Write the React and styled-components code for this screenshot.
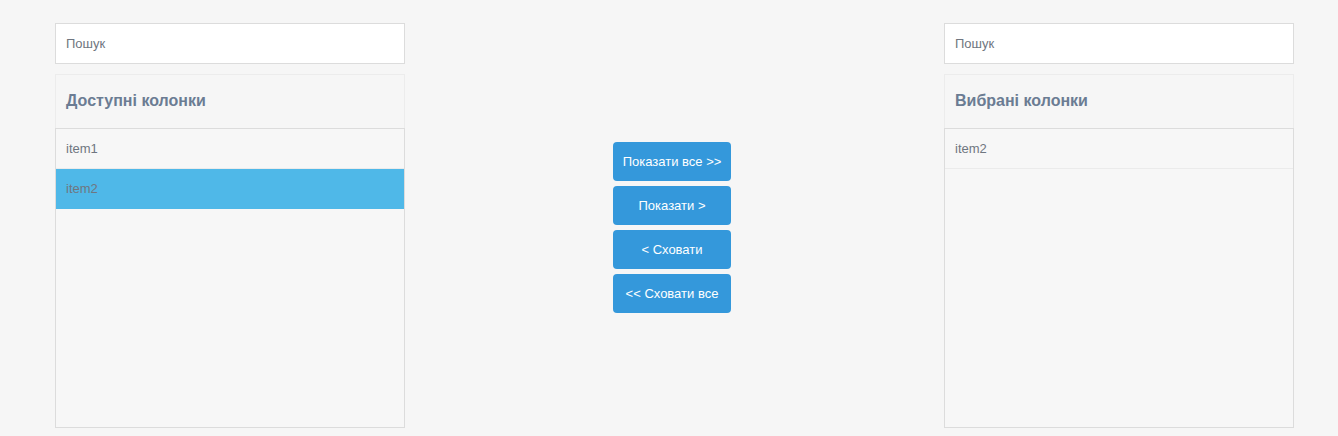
import styled, { createGlobalStyle } from 'styled-components';

const GlobalStyle = createGlobalStyle`
  body {
    margin: 0;
    background: #f6f6f6;
    font-family: "Liberation Sans", Arial, sans-serif;
  }
`;

const available = ['item1', 'item2'];
const chosen = ['item2'];

const App = () => (
  <>
    <GlobalStyle />
    <Layout>
      <Column>
        <Search placeholder="Пошук" />
        <Panel>
          <PanelTitle>Доступні колонки</PanelTitle>
          <List>
            {available.map((item) => (
              <Item key={item} $active={item === 'item2'}>{item}</Item>
            ))}
          </List>
        </Panel>
      </Column>

      <Actions>
        <MoveButton>Показати все &gt;&gt;</MoveButton>
        <MoveButton>Показати &gt;</MoveButton>
        <MoveButton>&lt; Сховати</MoveButton>
        <MoveButton>&lt;&lt; Сховати все</MoveButton>
      </Actions>

      <Column>
        <Search placeholder="Пошук" />
        <Panel>
          <PanelTitle>Вибрані колонки</PanelTitle>
          <List>
            {chosen.map((item) => (
              <Item key={item}>{item}</Item>
            ))}
          </List>
        </Panel>
      </Column>
    </Layout>
  </>
);

export default App;

// ----------------------
// Styled Components
// ----------------------

const Layout = styled.div`
  display: grid;
  grid-template-columns: 350px 1fr 350px;
  padding: 23px 44px 8px 55px;
`;

const Column = styled.div`
  display: flex;
  flex-direction: column;
  gap: 10px;
`;

const Search = styled.input`
  box-sizing: border-box;
  width: 100%;
  height: 41px;
  padding: 0 10px;
  border: 1px solid #dcdcdc;
  background: #fff;
  font-family: inherit;
  font-size: 13px;
  color: #555;
  outline: none;

  &::placeholder {
    color: #6f7680;
  }
`;

const Panel = styled.div`
  display: flex;
  flex-direction: column;
`;

const PanelTitle = styled.h3`
  box-sizing: border-box;
  margin: 0;
  height: 54px;
  padding: 0 10px 1px;
  display: flex;
  align-items: center;
  border: 1px solid #ececec;
  border-bottom: none;
  font-size: 16px;
  font-weight: bold;
  color: #6b7c93;
`;

const List = styled.div`
  box-sizing: border-box;
  height: 300px;
  border: 1px solid #dcdcdc;
  background: #f7f7f7;
`;

const Item = styled.div`
  box-sizing: border-box;
  height: 40px;
  padding: 0 10px;
  display: flex;
  align-items: center;
  border-bottom: 1px solid ${({ $active }) => ($active ? '#4fb8e8' : '#ebebeb')};
  background: ${({ $active }) => ($active ? '#4fb8e8' : 'transparent')};
  font-size: 13px;
  color: #6f7680;
`;

const Actions = styled.div`
  display: flex;
  flex-direction: column;
  align-items: center;
  justify-content: center;
  gap: 5px;
  padding: 4px 5px 0 0;
`;

const MoveButton = styled.button`
  width: 118px;
  height: 39px;
  border: none;
  border-radius: 4px;
  background: #3498db;
  color: #fff;
  font-family: inherit;
  font-size: 13px;
  cursor: pointer;

  &:hover {
    background: #2a88c8;
  }
`;
